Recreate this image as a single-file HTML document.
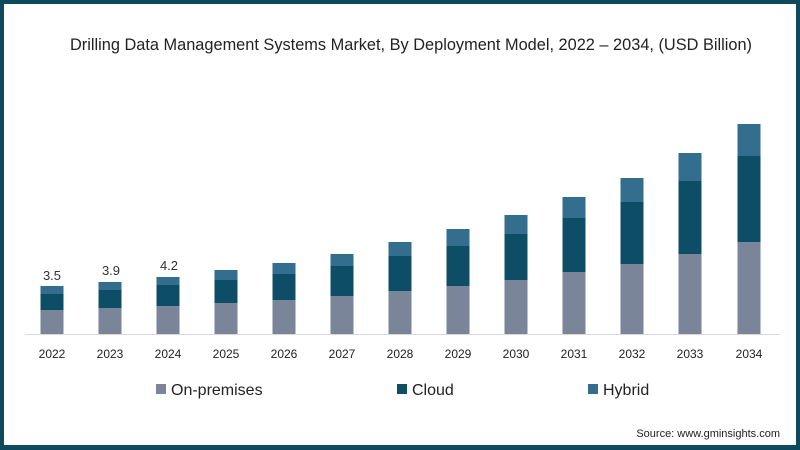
<!DOCTYPE html>
<html><head><meta charset="utf-8"><style>
html,body{margin:0;padding:0;background:#fff}
svg{display:block}
text{font-family:"Liberation Sans",sans-serif}
</style></head><body>
<svg width="800" height="450" viewBox="0 0 800 450">
<rect x="0" y="0" width="800" height="450" fill="#0d4a5e"/>
<rect x="4" y="4" width="792" height="441" fill="#fff"/>
<text x="70" y="50" font-size="17" fill="#222" textLength="682" lengthAdjust="spacingAndGlyphs">Drilling Data Management Systems Market, By Deployment Model, 2022 – 2034, (USD Billion)</text>
<line x1="25" y1="334.5" x2="780" y2="334.5" stroke="#d8d8d8" stroke-width="1"/>
<g id="bars"></g>
<text x="52" y="280" font-size="13" fill="#333" text-anchor="middle">3.5</text>
<text x="111" y="275" font-size="13" fill="#333" text-anchor="middle">3.9</text>
<text x="169" y="270" font-size="13" fill="#333" text-anchor="middle">4.2</text>
<g font-size="12" fill="#222" text-anchor="middle">
<text x="52" y="358">2022</text><text x="110" y="358">2023</text><text x="168" y="358">2024</text><text x="226" y="358">2025</text><text x="284" y="358">2026</text><text x="342" y="358">2027</text><text x="400" y="358">2028</text><text x="458" y="358">2029</text><text x="516" y="358">2030</text><text x="574" y="358">2031</text><text x="632" y="358">2032</text><text x="690" y="358">2033</text><text x="749" y="358">2034</text>
</g>
<rect x="156" y="384" width="10" height="10" fill="#7a8599"/>
<text x="171" y="395" font-size="16" fill="#222">On-premises</text>
<rect x="397" y="384" width="10" height="10" fill="#0d4d66"/>
<text x="412" y="395" font-size="16" fill="#222">Cloud</text>
<rect x="588" y="384" width="10" height="10" fill="#336e8f"/>
<text x="603" y="395" font-size="16" fill="#222">Hybrid</text>
<text x="780" y="437" font-size="11" fill="#222" text-anchor="end">Source: www.gminsights.com</text>
</svg>
<script>
var d=[[52,286,294,310],[110,282,290,308],[168,277,285,306],[226,270,280,303],[284,263,274,300],[342,254,266,296],[400,242,256,291],[458,229,246,286],[516,215,234,280],[574,197,218,272],[632,178,202,264],[690,153,181,254],[749,124,156,242]];
var g=document.getElementById('bars'),s='';
d.forEach(function(b){var x=b[0]-11.5;
s+='<rect x="'+x+'" y="'+b[1]+'" width="23" height="'+(b[2]-b[1])+'" fill="#336e8f"/>';
s+='<rect x="'+x+'" y="'+b[2]+'" width="23" height="'+(b[3]-b[2])+'" fill="#0d4d66"/>';
s+='<rect x="'+x+'" y="'+b[3]+'" width="23" height="'+(334-b[3])+'" fill="#7a8599"/>';});
g.innerHTML=s;
</script>
</body></html>
